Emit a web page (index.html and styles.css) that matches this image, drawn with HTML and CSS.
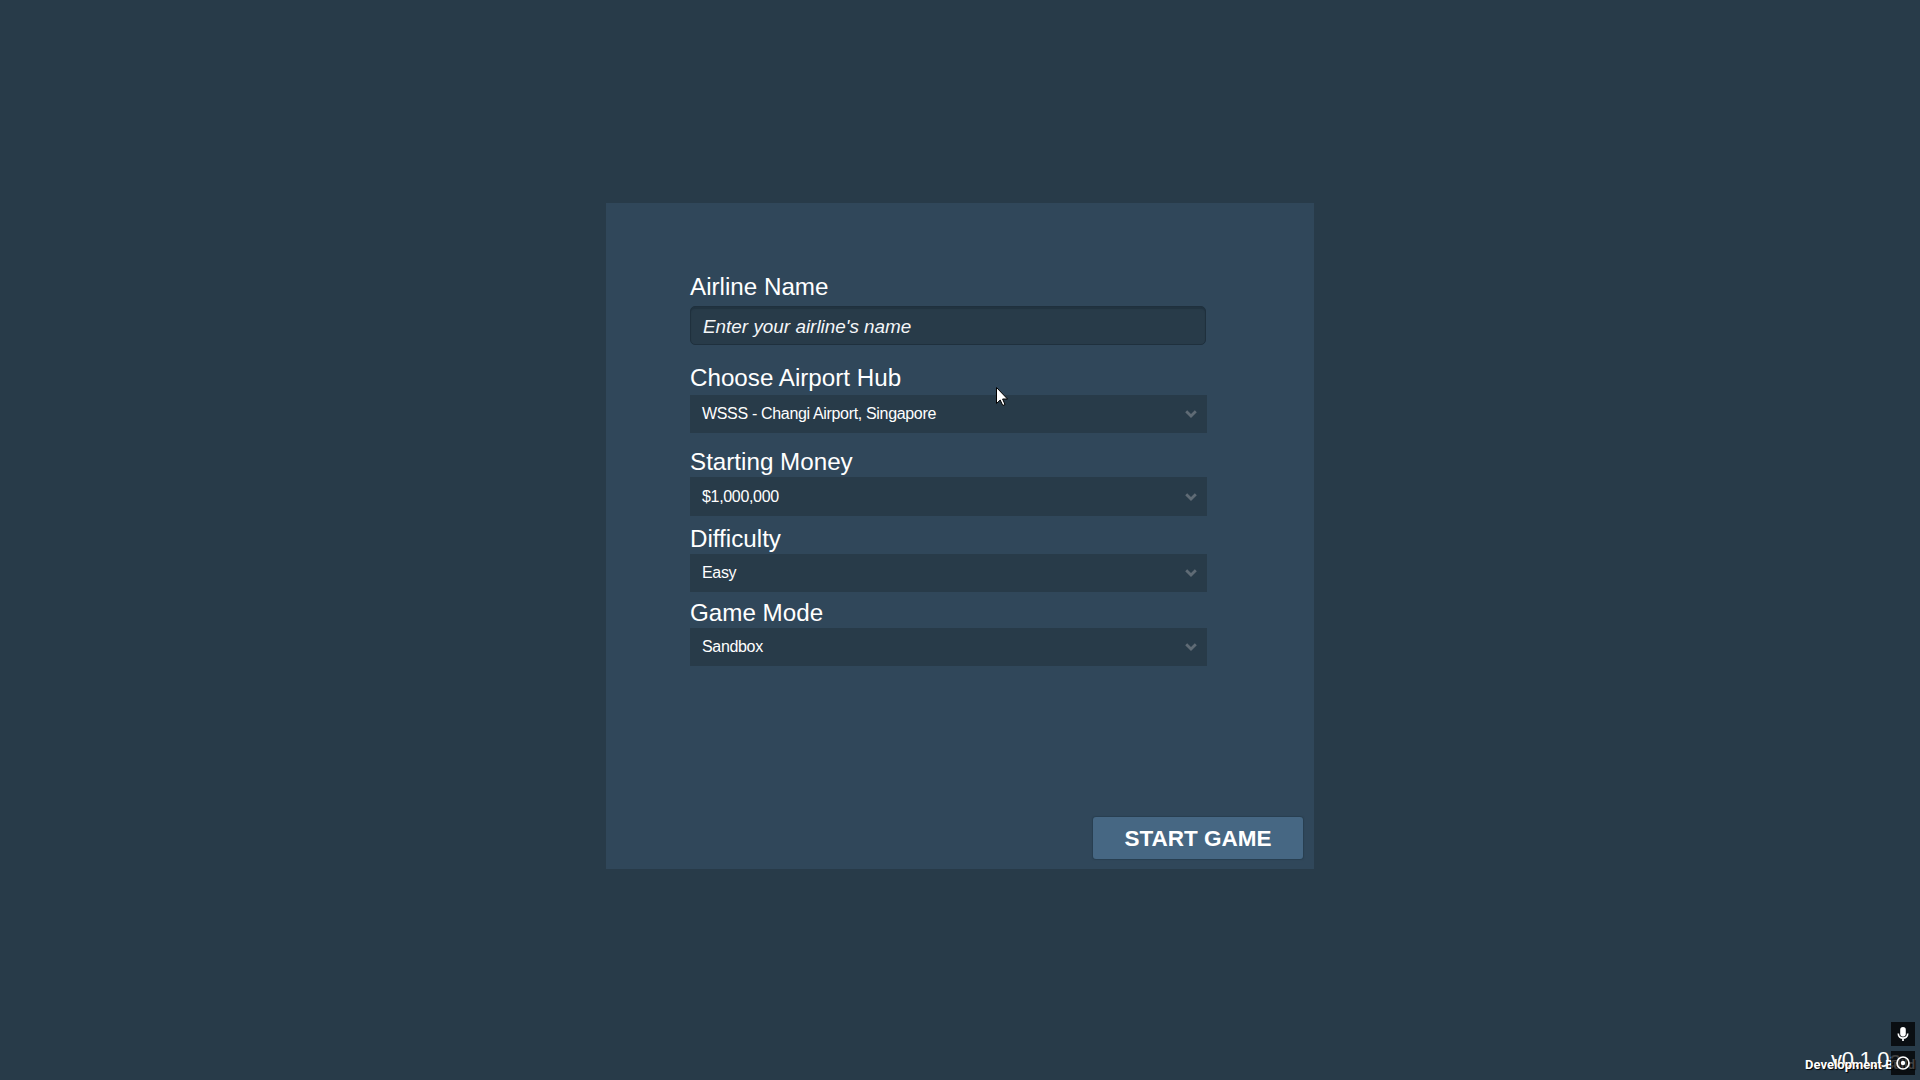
FILE: index.html
```html
<!DOCTYPE html>
<html lang="en">
<head>
    <meta charset="UTF-8">
    <meta name="viewport" content="width=device-width, initial-scale=1.0">
    <title>New Game</title>
    <link rel="stylesheet" href="styles.css">
</head>
<body>
    <main class="panel">
        <form class="setup-form">
            <div class="field field-name">
                <label for="airline-name">Airline Name</label>
                <input class="text-input" id="airline-name" type="text" placeholder="Enter your airline's name">
            </div>

            <div class="field field-hub">
                <label>Choose Airport Hub</label>
                <div class="dropdown">
                    <span>WSSS - Changi Airport, Singapore</span>
                    <svg class="chevron" viewBox="0 0 12 8"><path d="M1.2 1.2 L6 6 L10.8 1.2"/></svg>
                </div>
            </div>

            <div class="field field-money">
                <label>Starting Money</label>
                <div class="dropdown">
                    <span>$1,000,000</span>
                    <svg class="chevron" viewBox="0 0 12 8"><path d="M1.2 1.2 L6 6 L10.8 1.2"/></svg>
                </div>
            </div>

            <div class="field field-difficulty">
                <label>Difficulty</label>
                <div class="dropdown">
                    <span>Easy</span>
                    <svg class="chevron" viewBox="0 0 12 8"><path d="M1.2 1.2 L6 6 L10.8 1.2"/></svg>
                </div>
            </div>

            <div class="field field-mode">
                <label>Game Mode</label>
                <div class="dropdown">
                    <span>Sandbox</span>
                    <svg class="chevron" viewBox="0 0 12 8"><path d="M1.2 1.2 L6 6 L10.8 1.2"/></svg>
                </div>
            </div>
        </form>

        <button class="start-button" type="button">START GAME</button>
    </main>

    <!-- Version info and recorder buttons, over the page -->
    <div class="version">v0.1.0a</div>
    <div class="build-label">Development Build</div>
    <div class="recorder">
        <div class="recorder-button">
            <svg viewBox="0 0 24 24">
                <rect class="fill" x="9.2" y="5" width="5.6" height="9.6" rx="2.8"/>
                <path d="M7.3 11.5 C7.3 17.7 16.7 17.7 16.7 11.5 M12 16 V19"/>
            </svg>
        </div>
        <div class="recorder-button">
            <svg viewBox="0 0 24 24">
                <circle cx="12" cy="12" r="6"/>
                <circle class="fill" cx="12" cy="12" r="2.2"/>
            </svg>
        </div>
    </div>

    <svg class="cursor" viewBox="0 0 12 19">
        <path d="M0.5 0.5 V16.5 L4.2 13 L6.8 18.5 L9 17.5 L6.6 12 H11.5 Z"/>
    </svg>
</body>
</html>
```
FILE: styles.css
```css
/* General Styles */
* {
    box-sizing: border-box;
}

body {
    margin: 0;
    height: 100vh;
    padding-top: 203px;
    overflow: hidden;
    background-color: #283b49;
    color: #fff;
    font-family: "Liberation Sans", Arial, sans-serif;
}

/* Panel */
.panel {
    display: flex;
    flex-direction: column;
    justify-content: space-between;
    width: 708px;
    height: 666px;
    margin: 0 auto;
    padding: 72px 11px 10px 84px;
    background-color: #30475a;
}

/* Form */
.setup-form {
    width: 517px;
}

.field {
    display: flex;
    flex-direction: column;
    gap: 3px;
}

.field label {
    height: 24px;
    font-size: 24.2px;
    line-height: 24px;
}

.field-name {
    gap: 7px;
}

.field-hub {
    gap: 5px;
    margin-top: 21px;
}

.field-money {
    margin-top: 17px;
}

.field-difficulty {
    margin-top: 11px;
}

.field-mode {
    margin-top: 9px;
}

.text-input {
    width: 516px;
    height: 39px;
    padding: 2px 12px 0;
    border: 1px solid #1f303d;
    border-radius: 5px;
    background-color: #283b49;
    box-shadow: inset 0 2px 1px #213340;
    color: #fff;
    font-family: inherit;
    font-size: 18.9px;
}

.text-input::placeholder {
    color: #f4f6f8;
    font-style: italic;
}

.dropdown {
    display: flex;
    align-items: center;
    justify-content: space-between;
    height: 38px;
    padding: 0 10px 0 12px;
    background-color: #283b49;
    font-size: 16px;
    letter-spacing: -0.33px;
}

.field-money .dropdown {
    height: 39px;
}

.chevron {
    width: 12px;
    height: 8px;
    fill: none;
    stroke: #5f6b75;
    stroke-width: 2.8;
}

.start-button {
    align-self: flex-end;
    width: 210px;
    height: 42px;
    padding: 1px 0 0;
    border: 0;
    border-radius: 3px;
    background-color: #466783;
    box-shadow: 0 0 1px 1px #293f50;
    color: #fff;
    font-family: inherit;
    font-size: 22.5px;
    font-weight: bold;
}

/* Screen overlays */
.version {
    position: absolute;
    left: 1831px;
    top: 1049px;
    font-size: 22px;
    letter-spacing: -0.3px;
    line-height: 22px;
}

.build-label {
    position: absolute;
    left: 1805px;
    top: 1057px;
    font-family: Roboto, sans-serif;
    font-size: 13px;
    font-weight: bold;
    line-height: 16px;
    text-shadow: 1px 1px 1px #000;
    white-space: nowrap;
}

.recorder {
    position: absolute;
    right: 5px;
    bottom: 5px;
    display: flex;
    flex-direction: column;
    gap: 5px;
}

.recorder-button {
    width: 24px;
    height: 24px;
    background-color: rgba(0, 0, 0, 0.75);
}

.recorder-button svg {
    display: block;
    fill: none;
    stroke: #fff;
    stroke-width: 1.7;
}

.recorder-button .fill {
    fill: #fff;
    stroke: none;
}

.cursor {
    position: absolute;
    left: 996px;
    top: 387px;
    width: 12px;
    height: 19px;
    fill: #fff;
    stroke: #000;
    stroke-width: 1;
}
```
